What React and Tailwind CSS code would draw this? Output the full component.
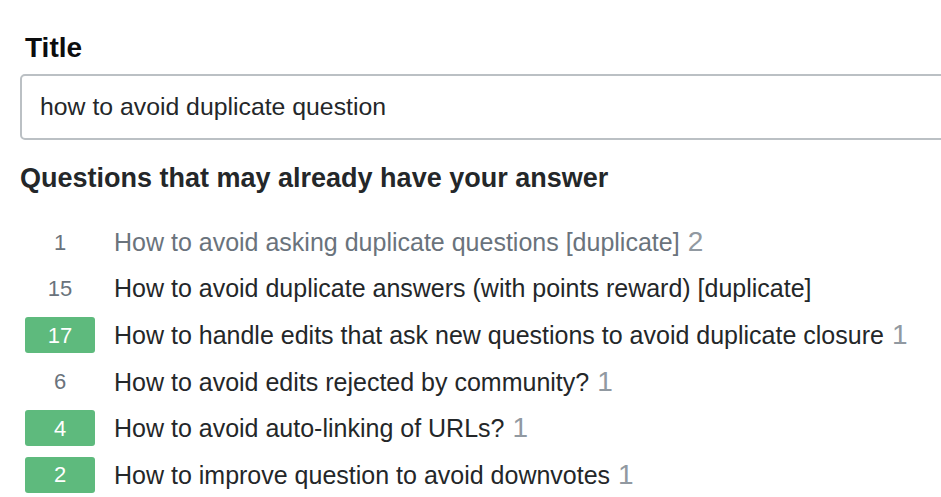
import React from "react";

const rows = [
  { votes: 1, title: "How to avoid asking duplicate questions [duplicate]", extra: "2", visited: true },
  { votes: 15, title: "How to avoid duplicate answers (with points reward) [duplicate]" },
  { votes: 17, title: "How to handle edits that ask new questions to avoid duplicate closure", extra: "1", accepted: true },
  { votes: 6, title: "How to avoid edits rejected by community?", extra: "1" },
  { votes: 4, title: "How to avoid auto-linking of URLs?", extra: "1", accepted: true },
  { votes: 2, title: "How to improve question to avoid downvotes", extra: "1", accepted: true },
];

const Row = ({ row }) => (
  <div className="flex items-center h-[46.5px]">
    <div className="w-[70px] ml-[25px] flex justify-center">
      {row.accepted ? (
        <div className="w-[70px] h-[36px] rounded-[3px] bg-[#5eba7d] text-white text-[22px] flex items-center justify-center">
          {row.votes}
        </div>
      ) : (
        <div className="text-[#6a737c] text-[22px]">{row.votes}</div>
      )}
    </div>
    <div className={`ml-[19px] text-[25px] whitespace-nowrap ${row.visited ? "text-[#6a737c]" : "text-[#242729]"}`}>
      {row.title}
      {row.extra && <span className="ml-[8px] text-[28px] text-[#9199a1]">{row.extra}</span>}
    </div>
  </div>
);

export default function App() {
  return (
    <div className="w-[941px] h-[497px] overflow-hidden bg-white font-['Liberation_Sans',Arial,sans-serif]">
      <div className="pt-[30px]">
        <div className="ml-[25px] text-[28px] font-bold text-[#0c0d0e] leading-[36px]">Title</div>
        <div className="ml-[20px] mt-[8px] w-[960px] h-[66px] border-2 border-[#bbc0c4] rounded-[5px] flex items-center pl-[18px]">
          <span className="text-[24.8px] text-[#242729]">how to avoid duplicate question</span>
        </div>
        <div className="ml-[20px] mt-[20px] text-[27px] font-bold text-[#242729] leading-[36px]">
          Questions that may already have your answer
        </div>
        <div className="mt-[23px]">
          {rows.map((r, i) => (
            <Row key={i} row={r} />
          ))}
        </div>
      </div>
    </div>
  );
}
